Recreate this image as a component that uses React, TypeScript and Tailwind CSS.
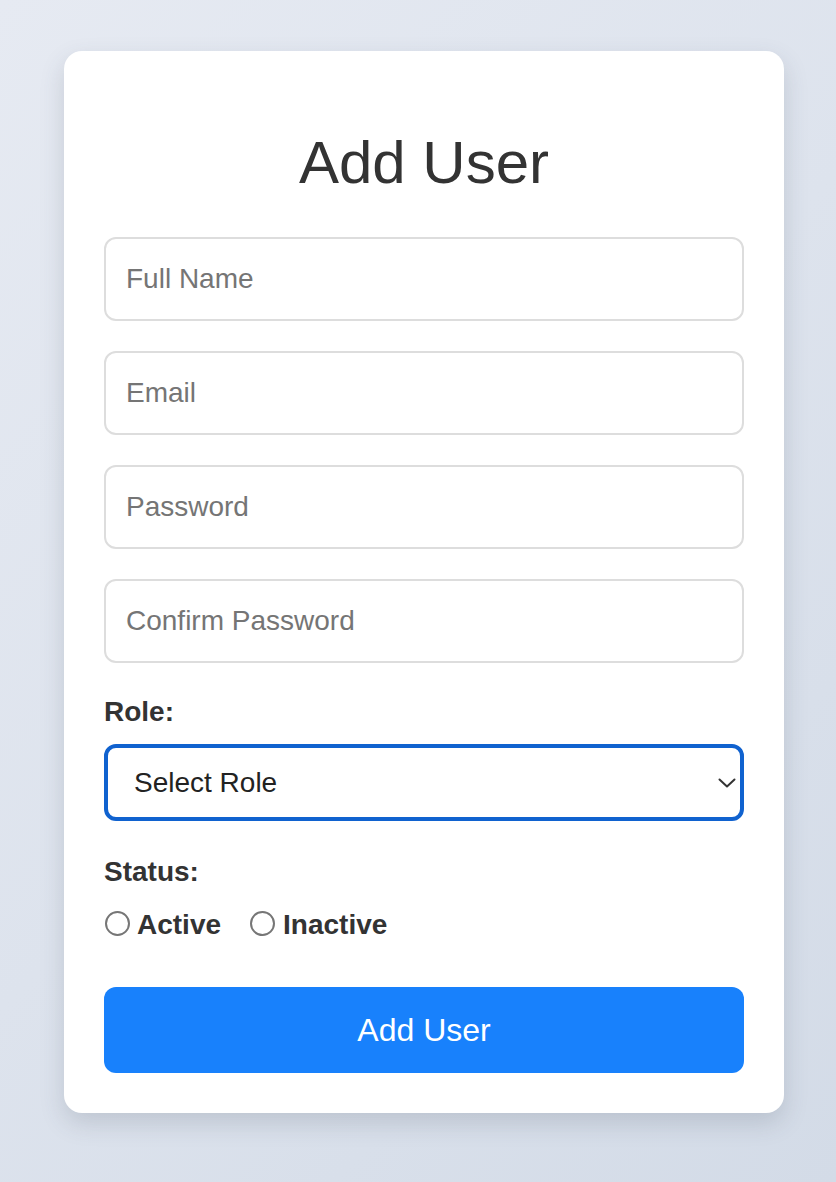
import React, { useState } from "react";

const fieldClass =
  "w-full h-[84px] border-2 border-[#dddddd] rounded-[12px] px-[20px] text-[28px] text-[#222] placeholder:text-[#757575] bg-white outline-none";

const App = () => {
  const [status, setStatus] = useState("");

  return (
    <div
      className="min-h-[1182px] w-full bg-[linear-gradient(135deg,#e6eaf2_0%,#dde3ed_50%,#d3dbe7_100%)] pt-[51px]"
      style={{ fontFamily: '"Liberation Sans", Arial, Helvetica, sans-serif' }}
    >
      <form className="mx-[64px] w-[720px] bg-white rounded-[18px] px-[40px] pt-[40px] pb-[40px] shadow-[0_10px_24px_rgba(60,70,90,0.18)]">
        <h2 className="mt-[35px] mb-[37px] text-center text-[60px] leading-[74px] font-normal text-[#333]">
          Add User
        </h2>

        <div className="flex flex-col gap-[30px]">
          <input className={fieldClass} placeholder="Full Name" />
          <input className={fieldClass} type="email" placeholder="Email" />
          <input className={fieldClass} type="password" placeholder="Password" />
          <input
            className={fieldClass}
            type="password"
            placeholder="Confirm Password"
          />
        </div>

        <label className="block mt-[33px] mb-[16px] text-[28px] leading-[32px] font-bold text-[#333]">
          Role:
        </label>
        <div className="relative">
          <select
            defaultValue=""
            className="appearance-none w-full h-[77px] border-4 border-[#1062cf] rounded-[12px] pl-[26px] pr-[50px] text-[28px] text-[#222] bg-white outline-none"
          >
            <option value="">Select Role</option>
            <option value="admin">Admin</option>
            <option value="user">User</option>
          </select>
          <svg
            className="absolute right-[8px] top-[34px] pointer-events-none"
            width="18"
            height="10"
            viewBox="0 0 18 10"
            fill="none"
          >
            <path
              d="M1.5 1.5 L9 8.5 L16.5 1.5"
              stroke="#333"
              strokeWidth="2"
              strokeLinecap="round"
              strokeLinejoin="round"
            />
          </svg>
        </div>

        <label className="block mt-[35px] mb-[21px] text-[28px] leading-[32px] font-bold text-[#333]">
          Status:
        </label>
        <div className="flex items-center h-[32px]">
          <label className="flex items-center gap-[7px] mr-[29px] text-[28px] font-bold text-[#333]">
            <input
              type="radio"
              name="status"
              checked={status === "active"}
              onChange={() => setStatus("active")}
              className="appearance-none w-[25px] h-[25px] rounded-full border-2 border-[#767676] bg-white ml-[1px] -mt-[4px] checked:border-[7px] checked:border-[#1062cf]"
            />
            Active
          </label>
          <label className="flex items-center gap-[8px] text-[28px] font-bold text-[#333]">
            <input
              type="radio"
              name="status"
              checked={status === "inactive"}
              onChange={() => setStatus("inactive")}
              className="appearance-none w-[25px] h-[25px] rounded-full border-2 border-[#767676] bg-white -mt-[4px] checked:border-[7px] checked:border-[#1062cf]"
            />
            Inactive
          </label>
        </div>

        <button
          type="submit"
          className="mt-[46px] w-full h-[86px] rounded-[12px] bg-[#1881fc] text-white text-[32px] leading-none"
        >
          Add User
        </button>
      </form>
    </div>
  );
};

export default App;
